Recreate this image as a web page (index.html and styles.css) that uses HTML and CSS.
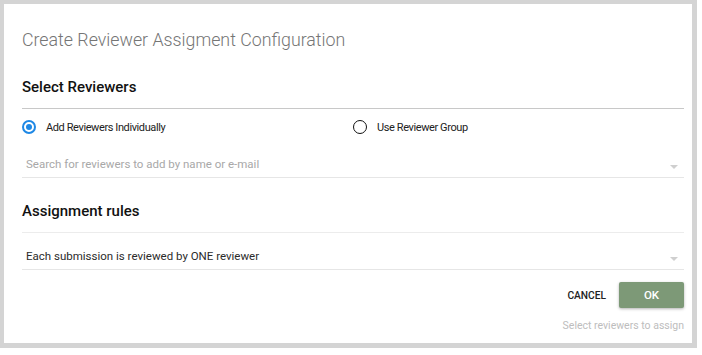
FILE: index.html
```html
<!DOCTYPE html>
<html lang="en">
<head>
    <meta charset="UTF-8">
    <title>Create Reviewer Assigment Configuration</title>
    <link rel="stylesheet" href="styles.css">
</head>
<body>
    <div class="dialog">
        <div class="dialog-title">Create Reviewer Assigment Configuration</div>

        <div class="section-title strong-rule">Select Reviewers</div>
        <div class="radio-group">
            <label class="radio-option">
                <span class="radio checked"></span>
                Add Reviewers Individually
            </label>
            <label class="radio-option">
                <span class="radio"></span>
                Use Reviewer Group
            </label>
        </div>
        <div class="field search-field">
            <span class="placeholder">Search for reviewers to add by name or e-mail</span>
            <span class="caret"></span>
        </div>

        <div class="section-title light-rule">Assignment rules</div>
        <div class="field select-field">
            <span class="value">Each submission is reviewed by ONE reviewer</span>
            <span class="caret"></span>
        </div>

        <div class="dialog-actions">
            <button class="flat-button">CANCEL</button>
            <button class="raised-button">OK</button>
        </div>
        <div class="hint">Select reviewers to assign</div>
    </div>
</body>
</html>
```

FILE: styles.css
```css
* {
    box-sizing: border-box;
}

html, body {
    margin: 0;
    background: #fff;
}

body {
    font-family: Roboto, "Liberation Sans", sans-serif;
    color: #212121;
}

.dialog {
    width: 697px;
    height: 348px;
    border: 4px solid #d4d4d4;
    border-right-width: 5px;
    border-bottom-width: 5px;
    padding: 24px 8px 0 18px;
    display: flex;
    flex-direction: column;
}

.dialog-title {
    font-size: 17.8px;
    font-weight: 300;
    line-height: 24px;
    color: #757575;
}

.section-title {
    font-size: 15px;
    font-weight: 500;
    line-height: 20px;
    color: #111;
    padding-bottom: 11px;
    margin-top: 25px;
}

.strong-rule {
    border-bottom: 1px solid #c8c8c8;
}

.light-rule {
    margin-top: 23px;
    border-bottom: 1px solid #ececec;
}

.radio-group {
    display: grid;
    grid-template-columns: 1fr 1fr;
    margin-top: 8px;
    height: 20px;
}

.radio-option {
    display: flex;
    align-items: center;
    gap: 10px;
    font-size: 11px;
    letter-spacing: -0.4px;
    color: #222;
    cursor: pointer;
}

.radio {
    width: 14px;
    height: 14px;
    border-radius: 50%;
    border: 1.5px solid #111;
    display: flex;
    align-items: center;
    justify-content: center;
}

.radio.checked {
    border: 2px solid #1e88e5;
}

.radio.checked::after {
    content: "";
    width: 6px;
    height: 6px;
    border-radius: 50%;
    background: #1e88e5;
}

.field {
    display: flex;
    align-items: center;
    justify-content: space-between;
    font-size: 11.5px;
    line-height: 16px;
    padding: 0 6px 5px 4px;
    border-bottom: 1px solid #e6e6e6;
}

.search-field {
    padding-top: 19px;
}

.select-field {
    padding-top: 15px;
}

.placeholder {
    color: #a8a8a8;
}

.value {
    color: #2b2b2b;
}

.caret {
    width: 0;
    height: 0;
    border-left: 4px solid transparent;
    border-right: 4px solid transparent;
    border-top: 4px solid #cfcfcf;
    margin-top: 5px;
}

.dialog-actions {
    display: flex;
    justify-content: flex-end;
    align-items: center;
    gap: 13px;
    margin-top: 12px;
}

button {
    font-family: Roboto, "Liberation Sans", sans-serif;
    font-size: 10.2px;
    font-weight: 500;
    border: none;
    cursor: pointer;
}

.flat-button {
    background: none;
    color: #222;
    padding: 0;
}

.raised-button {
    width: 65px;
    height: 26px;
    background: #7d9977;
    color: #fff;
    font-size: 11.5px;
    border-radius: 2px;
    box-shadow: 0 1px 3px rgba(0, 0, 0, 0.3);
}

.hint {
    margin-top: 11px;
    align-self: flex-end;
    font-size: 10.5px;
    line-height: 14px;
    color: #bdbdbd;
}
```
